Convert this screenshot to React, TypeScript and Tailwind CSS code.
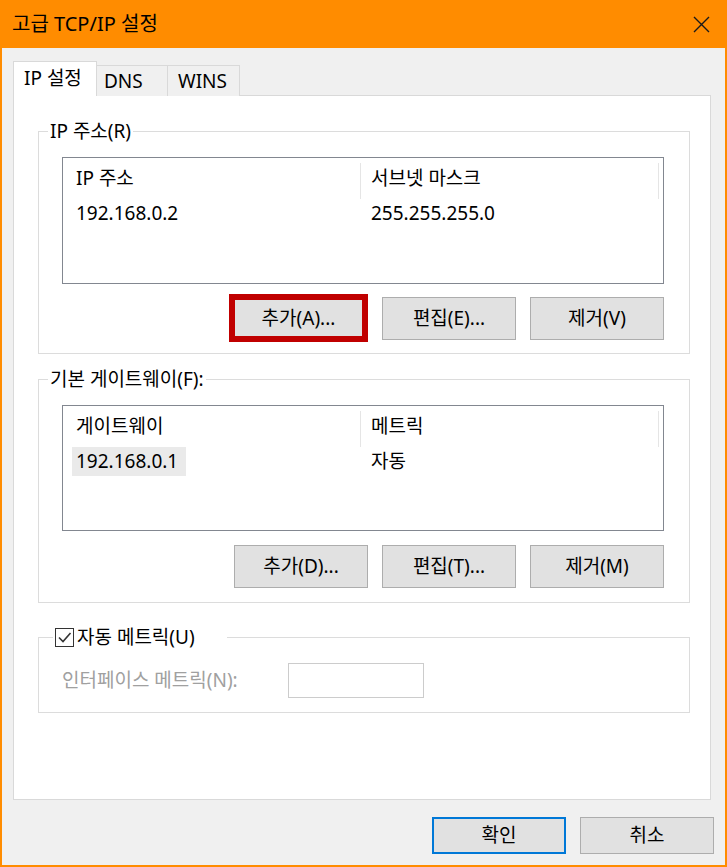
import React from 'react'

const font = { fontFamily: '"Noto Sans", "Noto Sans CJK KR", sans-serif' }

const Btn = ({ label, highlight }: { label: string; highlight?: boolean }) => {
  if (highlight) {
    // red marker drawn round the button in the screenshot
    return (
      <div className="-mt-[3px] -mb-[2px] w-[139px] h-[48px] border-[6px] border-[#c00000] bg-[#e1e1e1] flex items-center justify-center leading-none">
        {label}
      </div>
    )
  }
  return (
    <div className="w-[134px] h-[43px] flex items-center justify-center bg-[#e1e1e1] border border-[#adadad] leading-none">
      {label}
    </div>
  )
}

const ListView = ({
  cols,
  row,
  height,
  selected,
}: {
  cols: [string, string]
  row: [string, string]
  height: string
  selected?: boolean
}) => (
  <div className={'ml-[23px] w-[602px] bg-white border border-[#828790] ' + height}>
    <div className="flex h-[41px] items-start">
      <div className="w-[297px] h-[41px] flex items-center pl-[13px]">{cols[0]}</div>
      <div className="mt-[5px] w-px h-[36px] bg-[#e5e5e5]" />
      <div className="w-[297px] h-[41px] flex items-center pl-[10px]">{cols[1]}</div>
      <div className="mt-[5px] w-px h-[36px] bg-[#e5e5e5]" />
    </div>
    <div className="flex h-[29px] items-center">
      <div className="w-[298px] h-[29px] flex items-center">
        {selected ? (
          <span className="ml-[9px] w-[114px] h-[29px] pl-[4px] flex items-center bg-[#eaeaea]">
            {row[0]}
          </span>
        ) : (
          <span className="pl-[13px]">{row[0]}</span>
        )}
      </div>
      <div className="pl-[10px]">{row[1]}</div>
    </div>
  </div>
)

const Buttons = ({ labels, highlightFirst }: { labels: string[]; highlightFirst?: boolean }) => (
  <div className="flex items-start justify-end gap-[14px] pr-[25px]">
    {labels.map((l, i) => (
      <Btn key={l} label={l} highlight={highlightFirst && i === 0} />
    ))}
  </div>
)

export default function App() {
  return (
    <div
      className="w-[727px] h-[867px] bg-[#ff8c00] flex flex-col px-[2px] pb-[2px] text-[19px] text-black"
      style={font}
    >
      {/* title bar */}
      <div className="h-[48px] flex items-center justify-between pl-[10px] pr-[15px]">
        <span className="text-[20px] leading-none text-black">고급 TCP/IP 설정</span>
        <svg width="17" height="17" viewBox="0 0 17 17" stroke="#1a1a1a" strokeWidth="1.4">
          <path d="M1 1L16 16M16 1L1 16" />
        </svg>
      </div>

      <div className="flex-1 bg-[#f0f0f0] flex flex-col pl-[11px] pt-[13px]">
        {/* tabs */}
        <div className="flex items-end h-[35px] -mb-px relative z-10 leading-none">
          <div className="w-[84px] h-[35px] bg-white border border-b-0 border-[#d9d9d9] flex items-center pl-[10px] pb-[2px]">
            IP 설정
          </div>
          <div className="w-[71px] h-[31px] bg-[#f0f0f0] border border-l-0 border-b-0 border-[#d9d9d9] flex items-center pl-[7px]">
            DNS
          </div>
          <div className="w-[72px] h-[31px] bg-[#f0f0f0] border border-l-0 border-b-0 border-[#d9d9d9] flex items-center pl-[10px]">
            WINS
          </div>
        </div>

        {/* tab page */}
        <div className="w-[698px] h-[705px] bg-white border border-[#d9d9d9] pt-[23px] pl-[24px] leading-none">
          <fieldset className="w-[652px] border border-[#dcdcdc] pb-[13px]">
            <legend className="ml-[9px] px-[2px] h-[24px] leading-[24px]">IP 주소(R)</legend>
            <div className="mt-[14px]">
              <ListView
                cols={['IP 주소', '서브넷 마스크']}
                row={['192.168.0.2', '255.255.255.0']}
                height="h-[127px]"
              />
            </div>
            <div className="mt-[13px]">
              <Buttons labels={['추가(A)...', '편집(E)...', '제거(V)']} highlightFirst />
            </div>
          </fieldset>

          <fieldset className="mt-[13px] w-[652px] border border-[#dcdcdc] pb-[14px]">
            <legend className="ml-[9px] px-[2px] h-[24px] leading-[24px]">기본 게이트웨이(F):</legend>
            <div className="mt-[14px]">
              <ListView
                cols={['게이트웨이', '메트릭']}
                row={['192.168.0.1', '자동']}
                height="h-[126px]"
                selected
              />
            </div>
            <div className="mt-[14px]">
              <Buttons labels={['추가(D)...', '편집(T)...', '제거(M)']} />
            </div>
          </fieldset>

          <fieldset className="mt-[22px] w-[652px] border border-[#dcdcdc] pb-[14px]">
            <legend className="ml-[14px] pl-[2px] pr-[32px] h-[24px] flex items-center gap-[3px]">
              <span className="w-[19px] h-[19px] border border-[#333] bg-white flex items-center justify-center">
                <svg width="15" height="15" viewBox="0 0 15 15" fill="none" stroke="#333" strokeWidth="1.6">
                  <path d="M2 7.5L6 11.5L13.5 3" />
                </svg>
              </span>
              <span>자동 메트릭(U)</span>
            </legend>
            <div className="mt-[14px] flex items-center h-[35px] pl-[23px]">
              <span className="w-[226px] text-[#a0a0a0]">인터페이스 메트릭(N):</span>
              <div className="w-[136px] h-[35px] border border-[#cccccc] bg-white" />
            </div>
          </fieldset>
        </div>

        {/* footer */}
        <div className="flex justify-end gap-[14px] pr-[11px] pt-[17px]">
          <div className="w-[134px] h-[37px] flex items-center justify-center bg-[#e1e1e1] border-2 border-[#0078d7] leading-none">
            확인
          </div>
          <div className="w-[134px] h-[37px] flex items-center justify-center bg-[#e1e1e1] border border-[#adadad] leading-none">
            취소
          </div>
        </div>
      </div>
    </div>
  )
}
